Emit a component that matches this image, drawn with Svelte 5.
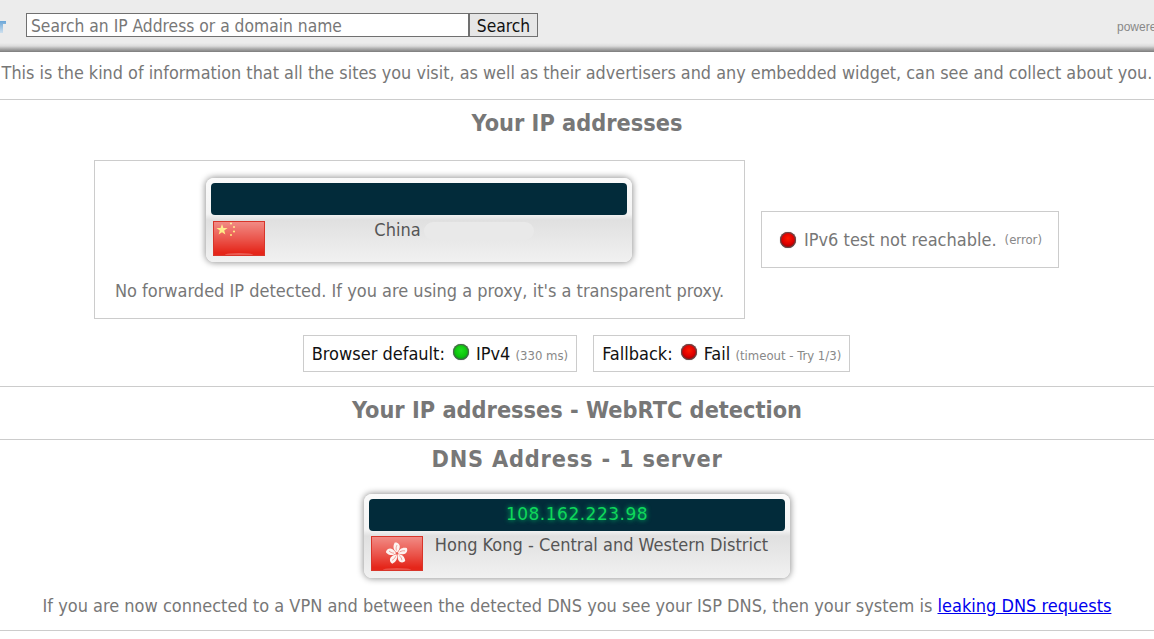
<script>
  let dnsServers = [{ ip: "108.162.223.98", place: "Hong Kong - Central and Western District" }]
  const petals = [0, 72, 144, 216, 288]
</script>

{#snippet gloss(id)}
  <defs>
    <linearGradient id={id} x1="0" y1="0" x2="0" y2="1">
      <stop offset="0" stop-color="#ffffff" stop-opacity="0.48" />
      <stop offset="0.55" stop-color="#ffffff" stop-opacity="0.2" />
      <stop offset="0.9" stop-color="#ffffff" stop-opacity="0" />
    </linearGradient>
  </defs>
{/snippet}

{#snippet chinaFlag()}
  <svg class="flag" viewBox="0 0 52 35" width="52" height="35">
    {@render gloss("cnGloss")}
    <rect width="52" height="35" fill="#e5261a" />
    <polygon fill="#ffe14d" points="9,3 10.4,7 14.6,7 11.2,9.6 12.4,13.6 9,11.2 5.6,13.6 6.8,9.6 3.4,7 7.6,7" />
    <circle cx="18" cy="2.5" r="1.1" fill="#ffd84a" />
    <circle cx="21" cy="6" r="1.1" fill="#ffd84a" />
    <circle cx="21" cy="10.5" r="1.1" fill="#ffd84a" />
    <circle cx="18" cy="14" r="1.1" fill="#ffd84a" />
    <rect width="52" height="35" fill="url(#cnGloss)" />
    <ellipse cx="26" cy="34" rx="14" ry="2" fill="#ffffff" opacity="0.25" />
    <rect x="0.5" y="0.5" width="51" height="34" fill="none" stroke="#d8352a" />
  </svg>
{/snippet}

{#snippet hongKongFlag()}
  <svg class="flag" viewBox="0 0 52 35" width="52" height="35">
    {@render gloss("hkGloss")}
    <rect width="52" height="35" fill="#e5261a" />
    <rect width="52" height="35" fill="url(#hkGloss)" />
    <g transform="translate(26 17.5)">
      {#each petals as angle}
        <g transform="rotate({angle})">
          <path d="M0,-1 C-3.5,-3 -4.6,-7 -2.2,-11 C1,-11.5 3.6,-8.5 2.6,-5.5 C2,-3.5 1,-2 0,-1 Z" fill="#fdf3f0" />
          <path d="M-0.6,-3 C-1.2,-5 -0.8,-7 0,-8.4" fill="none" stroke="#e88078" stroke-width="0.7" />
        </g>
      {/each}
    </g>
    <ellipse cx="26" cy="34" rx="14" ry="2" fill="#ffffff" opacity="0.2" />
    <rect x="0.5" y="0.5" width="51" height="34" fill="none" stroke="#d8352a" />
  </svg>
{/snippet}

<header class="topbar">
  <svg class="logo" width="7" height="16" viewBox="0 0 7 16">
    <defs>
      <linearGradient id="logoFade" x1="0" y1="0" x2="0" y2="1">
        <stop offset="0" stop-color="#6aa6d8" />
        <stop offset="1" stop-color="#cfe0ee" />
      </linearGradient>
    </defs>
    <path d="M0,2 H6 V5 H3 V14 H0 Z" fill="url(#logoFade)" />
  </svg>
  <form class="search" onsubmit={(e) => e.preventDefault()}>
    <input type="text" placeholder="Search an IP Address or a domain name" />
    <button type="submit">Search</button>
  </form>
  <span class="powered">powered by</span>
</header>

<p class="intro">This is the kind of information that all the sites you visit, as well as their advertisers and any embedded widget, can see and collect about you.</p>

<section class="ips">
  <h2>Your IP addresses</h2>
  <div class="addr-row">
    <div class="box main-box">
      <div class="card">
        <div class="screen"></div>
        <div class="where">
          {@render chinaFlag()}
          <div class="place"><span>China</span><span class="blob"></span></div>
        </div>
      </div>
      <p class="note">No forwarded IP detected. If you are using a proxy, it's a transparent proxy.</p>
    </div>
    <div class="box v6-box">
      <i class="dot red"></i>
      <span>IPv6 test not reachable.</span>
      <small>(error)</small>
    </div>
  </div>
  <div class="status-row">
    <div class="box status">
      Browser default:<i class="dot green"></i>IPv4 <small>(330 ms)</small>
    </div>
    <div class="box status">
      Fallback:<i class="dot red"></i>Fail <small>(timeout - Try 1/3)</small>
    </div>
  </div>
</section>

<section class="webrtc">
  <h2>Your IP addresses - WebRTC detection</h2>
</section>

<section class="dns">
  <h2>DNS Address - 1 server</h2>
  {#each dnsServers as server}
    <div class="card">
      <div class="screen">{server.ip}</div>
      <div class="where">
        {@render hongKongFlag()}
        <div class="place">{server.place}</div>
      </div>
    </div>
  {/each}
  <p class="leak">If you are now connected to a VPN and between the detected DNS you see your ISP DNS, then your system is <a href="#leak">leaking DNS requests</a></p>
</section>

<style>
  :global(body) {
    background: #fff;
    overflow: hidden;
    font-family: "DejaVu Sans", Verdana, sans-serif;
    font-stretch: condensed;
    color: #777;
  }

  .topbar {
    height: 52px;
    box-sizing: border-box;
    background: linear-gradient(#ececec 0, #ececec 43px, #dcdcdc 46px, #a8a8a8 49px, #7c7c7c 52px);
    display: flex;
    align-items: flex-start;
    overflow: hidden;
    white-space: nowrap;
  }
  .logo {
    flex: none;
    margin-top: 19px;
  }
  .search {
    display: flex;
    margin: 13px 0 0 19px;
    height: 24px;
  }
  .search input {
    width: 443px;
    box-sizing: border-box;
    height: 24px;
    padding: 1px 4px 0;
    border: 1px solid #707070;
    background: #fff;
    font: inherit;
    font-size: 17.3px;
    outline: none;
  }
  .search input::placeholder {
    color: #777;
    opacity: 1;
  }
  .search button {
    width: 69px;
    height: 24px;
    padding: 1px 0 0;
    border: 1px solid #707070;
    background: #e6e6e6;
    font: inherit;
    font-size: 17.3px;
    color: #111;
  }
  .powered {
    margin: 20px -25px 0 auto;
    font-family: "Liberation Sans", Arial, sans-serif;
    font-stretch: normal;
    font-size: 12px;
    color: #888;
  }

  .intro {
    margin: 0;
    height: 48px;
    box-sizing: border-box;
    padding-top: 10px;
    text-align: center;
    white-space: nowrap;
    font-size: 17.85px;
    line-height: 22px;
    border-bottom: 1px solid #ccc;
  }

  section {
    text-align: center;
    border-bottom: 1px solid #ccc;
  }
  h2 {
    margin: 0;
    font-size: 23.3px;
    line-height: 28px;
    color: #777;
    font-weight: bold;
  }

  .ips {
    padding: 9px 0 14px;
  }
  .addr-row {
    display: flex;
    justify-content: center;
    align-items: center;
    gap: 16px;
    margin-top: 23px;
    padding-right: 1px;
  }
  .box {
    border: 1px solid #ccc;
    box-sizing: border-box;
  }
  .main-box {
    width: 651px;
    height: 159px;
    padding-top: 17px;
  }
  .main-box .card {
    margin-left: 111px;
  }
  .v6-box {
    width: 298px;
    height: 57px;
    display: flex;
    align-items: center;
    gap: 8px;
    padding-left: 18px;
    font-size: 18px;
  }
  .note {
    margin: 18px 0 0;
    font-size: 18px;
    line-height: 22px;
  }
  small {
    font-size: 13px;
    color: #888;
  }

  .dot {
    display: inline-block;
    flex: none;
    width: 16px;
    height: 16px;
    border-radius: 50%;
    box-shadow: 0 0 1px 1px #555 inset, 0 0 1px #888;
  }
  .dot.red {
    background: radial-gradient(circle at 50% 40%, #ff1a00 0, #e00000 45%, #500 100%);
  }
  .dot.green {
    background: radial-gradient(circle at 50% 40%, #1ee01e 0, #0cc40c 50%, #063 100%);
  }

  .status-row {
    display: flex;
    justify-content: center;
    gap: 16px;
    margin-top: 16px;
    padding-right: 1px;
  }
  .status {
    height: 37px;
    padding: 0 8px;
    line-height: 36px;
    font-size: 18px;
    color: #111;
    white-space: nowrap;
  }
  .status .dot {
    margin: 0 7px 0 8px;
    vertical-align: 0;
  }

  .card {
    width: 426px;
    height: 84px;
    box-sizing: border-box;
    margin: 0 auto;
    padding-top: 5px;
    border-radius: 8px;
    background: linear-gradient(#fafafa 0, #f4f4f4 36px, #e0e0e0 42px, #f1f1f1 100%);
    box-shadow: 0 0 6px 1px rgba(0, 0, 0, 0.4);
    overflow: hidden;
  }
  .screen {
    margin: 0 5px;
    height: 32px;
    border-radius: 4px;
    background: #022b3a;
    color: #0fd85a;
    font-size: 17px;
    font-stretch: normal;
    line-height: 30px;
    text-align: center;
    letter-spacing: 0.5px;
    text-shadow: 0 0 5px #0c6;
  }
  .where {
    display: flex;
    align-items: flex-start;
    padding: 6px 0 0 7px;
    font-size: 18px;
    color: #555;
  }
  .flag {
    flex: none;
    display: block;
  }
  .place {
    flex: 1;
    line-height: 20px;
    margin-top: -1px;
    padding-right: 10px;
    white-space: nowrap;
  }
  .blob {
    display: inline-block;
    width: 110px;
    height: 18px;
    vertical-align: middle;
    margin: 0 -21px 0 3px;
    border-radius: 9px;
    background: #e9e9e9;
  }

  .webrtc {
    padding: 9px 0 15px;
  }
  .dns {
    padding: 5px 0 13px;
  }
  .dns h2 {
    letter-spacing: 0.8px;
  }
  .dns .card {
    margin-top: 21px;
  }
  .dns .where {
    padding-top: 5px;
  }
  .leak {
    margin: 17px 0 0;
    font-size: 18px;
    line-height: 22px;
    white-space: nowrap;
  }
  .leak a {
    color: #0000ee;
  }
</style>
